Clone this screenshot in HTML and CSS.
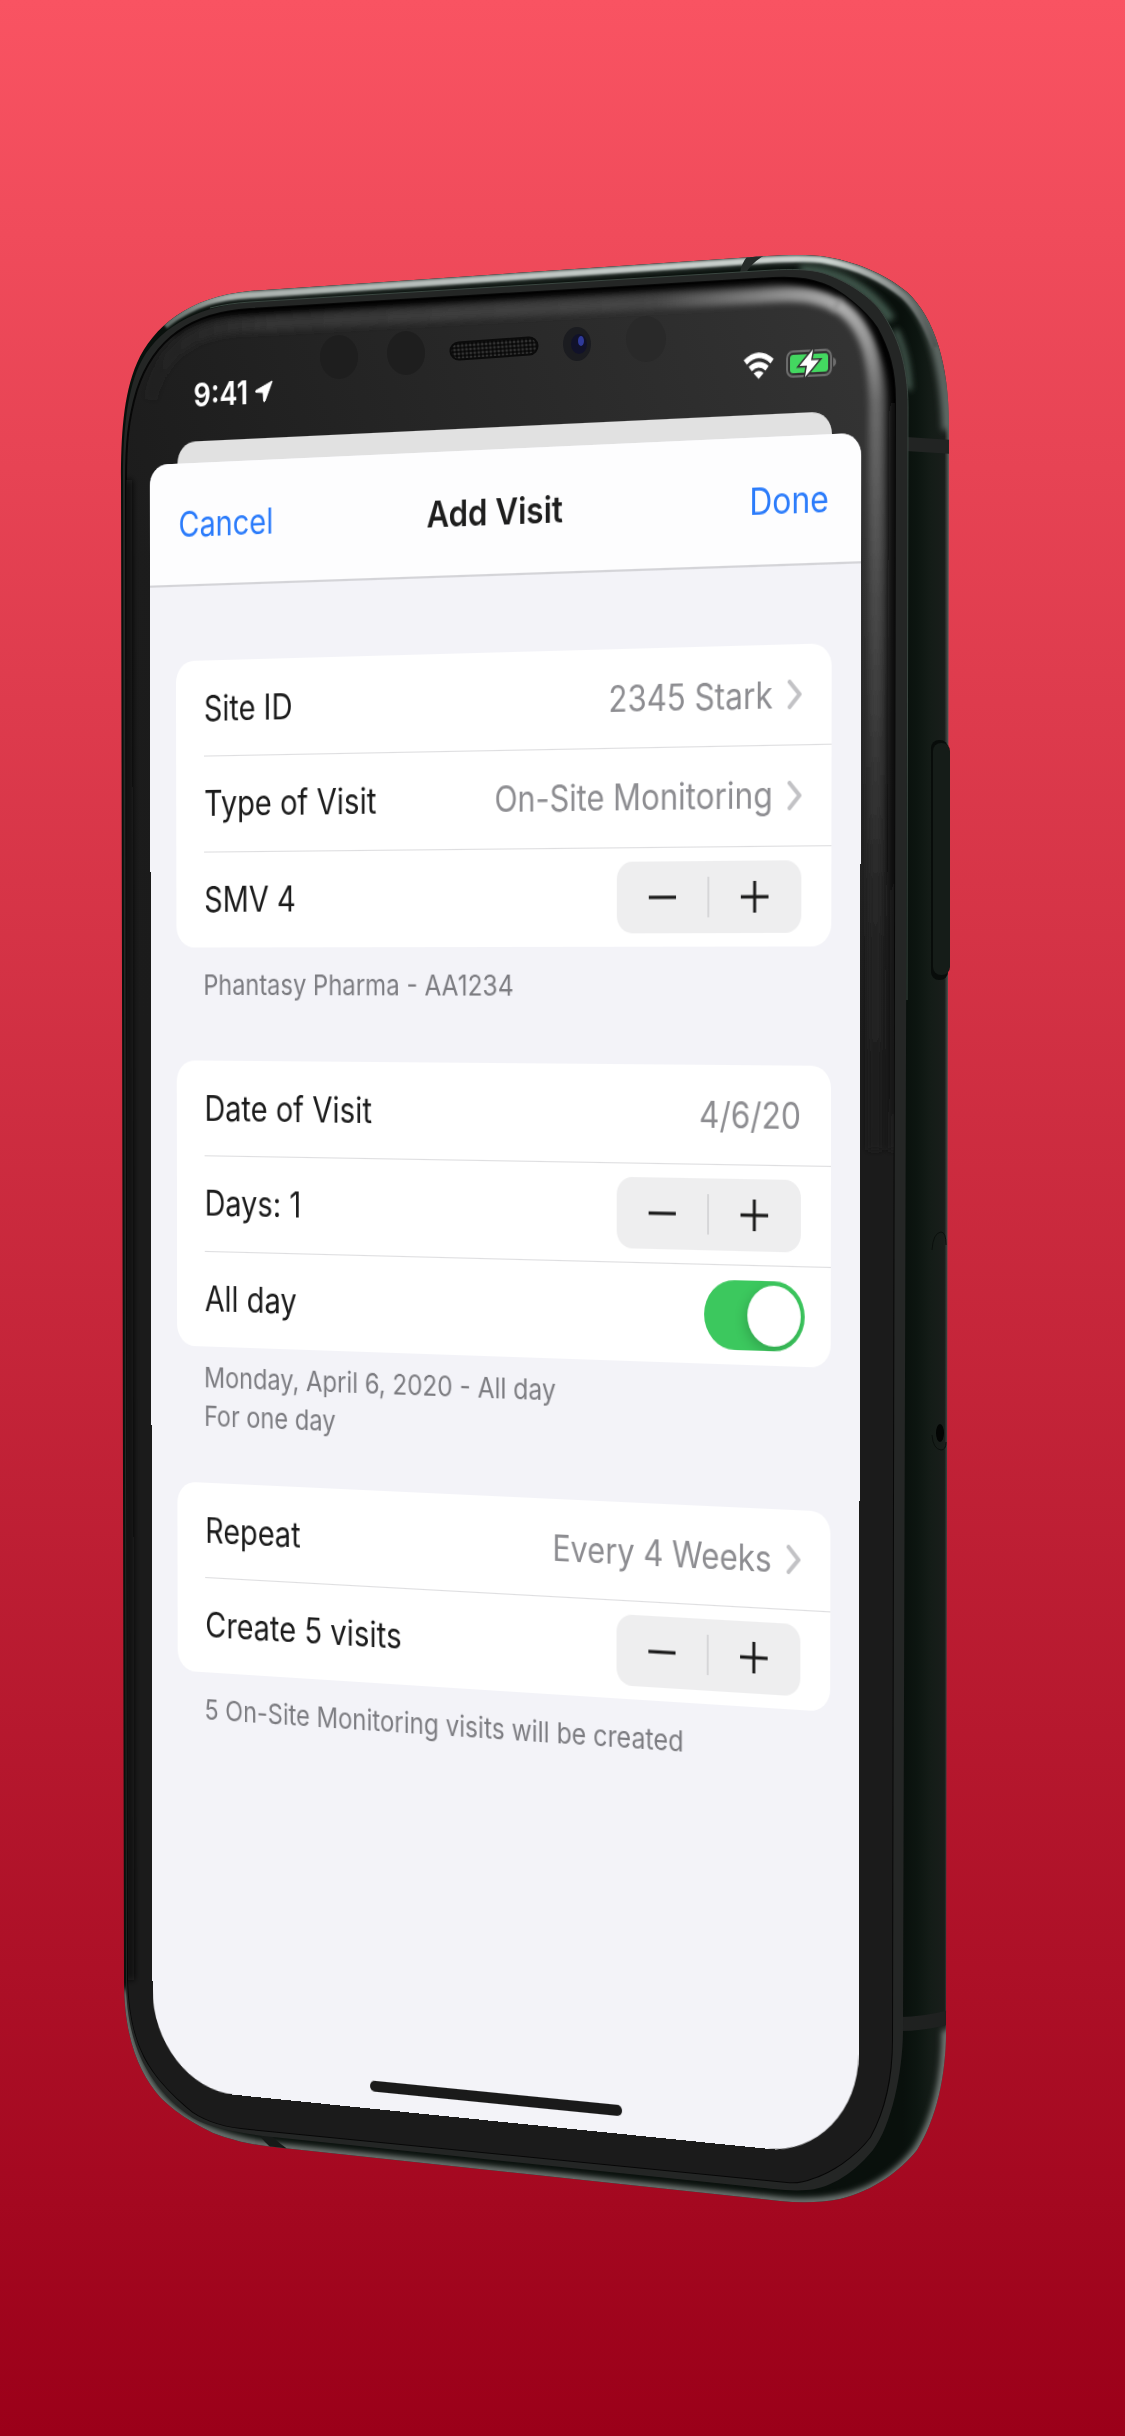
FILE: index.html
```html
<!DOCTYPE html>
<html lang="en">
<head>
<meta charset="utf-8">
<meta name="viewport" content="width=device-width, initial-scale=1">
<title>Add Visit</title>
<link rel="stylesheet" href="styles.css">
</head>
<body>
<main class="stage">
  <div class="device">
    <svg class="device-body" viewBox="112 232 901 1972" aria-hidden="true">
      <defs>
        <linearGradient id="side" gradientUnits="userSpaceOnUse" x1="903" y1="0" x2="949" y2="0">
          <stop offset="0" stop-color="#09100c"/>
          <stop offset=".3" stop-color="#0c1510"/>
          <stop offset=".6" stop-color="#141c17"/>
          <stop offset=".9" stop-color="#191e1b"/>
          <stop offset="1" stop-color="#5c5f5d"/>
        </linearGradient>
        <linearGradient id="topEdge" gradientUnits="userSpaceOnUse" x1="150" y1="0" x2="949" y2="0">
          <stop offset="0" stop-color="#4b5752"/>
          <stop offset=".1" stop-color="#a9b1ad"/>
          <stop offset=".5" stop-color="#c0c7c4"/>
          <stop offset=".85" stop-color="#cdd4d0"/>
          <stop offset=".93" stop-color="#8c9290"/>
          <stop offset="1" stop-color="#3a403d"/>
        </linearGradient>
        <linearGradient id="glass" gradientUnits="userSpaceOnUse" x1="130" y1="520" x2="900" y2="300">
          <stop offset="0" stop-color="#1c1c1c"/>
          <stop offset="1" stop-color="#353535"/>
        </linearGradient>
        <linearGradient id="glassFade" x1="0" y1="0" x2="0" y2="1">
          <stop offset=".12" stop-color="#1b1b1b" stop-opacity="0"/>
          <stop offset=".4" stop-color="#1b1b1b"/>
        </linearGradient>
        <linearGradient id="shineTop" gradientUnits="userSpaceOnUse" x1="130" y1="0" x2="830" y2="0">
          <stop offset="0" stop-color="#2a2a2a" stop-opacity="0"/>
          <stop offset=".2" stop-color="#343434"/>
          <stop offset=".75" stop-color="#464646"/>
          <stop offset="1" stop-color="#a8a8a8"/>
        </linearGradient>
        <linearGradient id="shineSide" gradientUnits="userSpaceOnUse" x1="0" y1="300" x2="0" y2="1150">
          <stop offset="0" stop-color="#b4b4b4"/>
          <stop offset=".12" stop-color="#6a6a6a"/>
          <stop offset=".35" stop-color="#4a4a4a"/>
          <stop offset=".7" stop-color="#262626"/>
          <stop offset="1" stop-color="#1b1b1b"/>
        </linearGradient>
        <linearGradient id="glassEdge" gradientUnits="userSpaceOnUse" x1="0" y1="300" x2="0" y2="1150">
          <stop offset="0" stop-color="#050505"/>
          <stop offset=".5" stop-color="#0c0c0c"/>
          <stop offset="1" stop-color="#1b1b1b"/>
        </linearGradient>
        <pattern id="mesh" width="4" height="4" patternUnits="userSpaceOnUse" patternTransform="rotate(-4)">
          <rect width="4" height="4" fill="#141414"/>
          <circle cx="1" cy="1" r="1" fill="#3c3c3c"/>
          <circle cx="3" cy="3" r="1" fill="#050505"/>
        </pattern>
        <filter id="soft" filterUnits="userSpaceOnUse" x="100" y="220" width="920" height="2000"><feGaussianBlur stdDeviation="3"/></filter>
        <filter id="fine" filterUnits="userSpaceOnUse" x="100" y="220" width="920" height="2000"><feGaussianBlur stdDeviation="1"/></filter>
        <path id="shell" d="M121 480C121 437 123 395 137 363C153 327 188 297 250 291L767 256C785 255 810 254 827 257C862 263 889 277 907 292C935 318 949 365 949 425L946 2030C946 2075 937 2118 917 2150C900 2171 875 2190 840 2199C820 2203 800 2203 780 2201L283 2148C255 2145 240 2143 213 2133C187 2120 173 2110 160 2097C140 2074 124 2040 124 1980Z"/>
        <path id="rim" d="M123 480C123 437 126 395 139 366C156 330 192 307 250 302L773 270C790 269 810 269 823 273C848 281 870 297 880 310C898 335 908 365 908 407L903 2030C903 2070 892 2125 873 2150C850 2178 825 2189 807 2190C795 2191 785 2190 773 2189L263 2136C240 2133 210 2128 193 2118C145 2085 126 2040 126 1980Z"/>
        <path id="face" d="M126 480C126 445 128 420 137 390C150 350 180 313 250 309L773 278C790 277 808 278 823 284C840 290 865 310 877 328C889 350 895 370 895 400L892 2040C892 2075 885 2110 870 2137C855 2157 830 2173 813 2178C803 2182 795 2183 787 2182L250 2129C225 2127 208 2122 193 2112C148 2075 130 2045 128 1980Z"/>
        <clipPath id="shellClip"><use href="#shell"/></clipPath>
        <clipPath id="faceClip"><use href="#face"/></clipPath>
      </defs>

      <use href="#shell" fill="url(#side)"/>
      <g clip-path="url(#shellClip)">
        <path d="M180 308C205 295 225 293 250 292L767 257C785 256 810 255 827 258C862 264 889 278 907 293C930 315 946 360 948 430" fill="none" stroke="#5d6863" stroke-width="12" filter="url(#soft)"/>
        <path d="M165 326C195 302 220 297 250 295L767 260C785 259 810 258 827 261C860 267 886 281 904 296C917 308 927 327 935 347" fill="none" stroke="url(#topEdge)" stroke-width="6" filter="url(#fine)"/>
        <path d="M800 270C845 270 875 296 891 320" fill="none" stroke="#41564b" stroke-width="10" filter="url(#soft)"/>
        <path d="M895 330C903 345 908 365 909 390" fill="none" stroke="#4a5f54" stroke-width="6" filter="url(#soft)"/>
        <path d="M124 1990C126 2040 140 2074 160 2097C180 2120 213 2140 283 2148L780 2201C850 2208 890 2185 917 2150C937 2118 946 2075 946 2030" fill="none" stroke="#868d8a" stroke-width="7" filter="url(#soft)"/>
        <path d="M743 273C746 265 755 257 767 250L758 250C749 257 744 266 743 273Z" fill="#262b29" stroke="#262b29" stroke-width="6"/>
        <path d="M264 2134C269 2140 275 2146 284 2152" fill="none" stroke="#161a18" stroke-width="9"/>
        <path d="M906 444L952 447" fill="none" stroke="#222423" stroke-width="14"/>
        <path d="M900 2024C920 2024 935 2021 950 2017" fill="none" stroke="#1f2120" stroke-width="14"/>
      </g>
      <rect x="931" y="740" width="17" height="240" rx="8" fill="#080c0a"/>
      <rect x="933" y="743" width="17" height="232" rx="8" fill="#151c18"/>
      <path d="M932 1250Q933 1233 941 1232Q946 1232 946 1245" fill="none" stroke="#0a0f0c"/>
      <path d="M932 1435Q933 1449 941 1450Q946 1450 946 1442" fill="none" stroke="#0a0f0c"/>
      <ellipse cx="940" cy="1433" rx="4" ry="9" fill="#030504"/>
      <use href="#rim" fill="#242625"/>
      <path d="M210 308C222 305 235 303 250 302L773 270C790 269 810 269 823 273C848 281 870 297 880 310C898 335 908 365 908 407L907 1000" fill="none" stroke="#3a4640" stroke-width="1"/>
      <use href="#face" fill="url(#glass)" stroke="#070707" stroke-width="2"/>
      <use href="#face" fill="url(#glassFade)"/>
      <g clip-path="url(#faceClip)">
        <path d="M170 330C190 314 215 309 250 308L773 277C840 275 895 330 895 400L894 1150" fill="none" stroke="url(#glassEdge)" stroke-width="13" filter="url(#soft)"/>
        <path d="M150 400C160 350 195 327 250 325L780 295C806 294 822 297 838 306" fill="none" stroke="url(#shineTop)" stroke-width="14" filter="url(#soft)"/>
        <path d="M836 304C866 322 876 355 876 410L875 1150" fill="none" stroke="url(#shineSide)" stroke-width="14" filter="url(#soft)"/>
        <path d="M128 480L130 1980" fill="none" stroke="#101010" stroke-width="8" filter="url(#soft)"/>
      </g>
      <g fill="#1e1e1e">
        <ellipse cx="339" cy="357" rx="19" ry="22"/>
        <ellipse cx="406" cy="353" rx="19" ry="22"/>
        <ellipse cx="646" cy="339" rx="20" ry="23" fill="#292929"/>
      </g>
      <path d="M459 351L529 346" stroke="#0b0b0b" stroke-width="19" stroke-linecap="round"/>
      <path d="M459 351L529 346" stroke="url(#mesh)" stroke-width="15" stroke-linecap="round"/>
      <ellipse cx="577" cy="344" rx="14" ry="17" fill="#1b1c20"/>
      <ellipse cx="579" cy="344" rx="8" ry="10" fill="#11122a"/>
      <ellipse cx="581" cy="341" rx="3" ry="5" fill="#2f3a9a"/>
    </svg>

    <div class="screen">
      <header class="status">
        <div class="status-time">
          <span>9:41</span>
          <svg width="20" height="20" viewBox="0 0 20 20" aria-label="Location in use"><path d="M19 1L1 9Q0 10 1 10.500L9 11L9.500 19Q10 20 11 19Z" fill="#fff" stroke="#fff" stroke-linejoin="round"/></svg>
        </div>
        <div class="status-icons">
          <svg width="31" height="24" viewBox="0 0 31 24" aria-label="Wi-Fi"><g fill="none" stroke="#fff" stroke-width="5"><path d="M2 8.500Q15.500-3 29 8.500"/><path d="M7 14.500Q15.500 7.500 24 14.500"/></g><path d="M15.500 23.500L10.500 18.500Q15.500 14.500 20.500 18.500Z" fill="#fff"/></svg>
          <svg width="50" height="24" viewBox="0 0 50 24" aria-label="Battery charging"><rect x="1" y="1" width="44" height="22" rx="6" fill="none" stroke="#6c6c6c" stroke-width="2"/><rect x="4" y="4" width="38" height="16" rx="3" fill="#43d860"/><path d="M47 8Q50 9 50 12T47 16Z" fill="#6c6c6c"/><path d="M27 0L13.500 14H21L19 24L33 9.500H25Z" fill="#fff" stroke="#333" stroke-width="3" paint-order="stroke"/></svg>
        </div>
      </header>
      <div class="back-sheet"></div>
      <section class="sheet">
        <nav class="nav">
          <button type="button" class="nav-btn">Cancel</button>
          <h1 class="nav-title">Add Visit</h1>
          <button type="button" class="nav-btn nav-btn-end">Done</button>
        </nav>
        <form class="form">
          <div class="card">
            <button type="button" class="row">
              <span class="label">Site ID</span><span class="value">2345 Stark</span>
              <svg class="chevron" width="14" height="26" viewBox="0 0 14 26" aria-hidden="true"><path d="M2 2L12 13L2 24"/></svg>
            </button>
            <button type="button" class="row">
              <span class="label">Type of Visit</span><span class="value">On-Site Monitoring</span>
              <svg class="chevron" width="14" height="26" viewBox="0 0 14 26" aria-hidden="true"><path d="M2 2L12 13L2 24"/></svg>
            </button>
            <div class="row">
              <span class="label">SMV 4</span>
              <div class="stepper">
                <button type="button" aria-label="Decrease SMV"><svg width="28" height="28" viewBox="0 0 28 28"><path d="M0 14H28"/></svg></button>
                <button type="button" aria-label="Increase SMV"><svg width="28" height="28" viewBox="0 0 28 28"><path d="M0 14H28M14 0V28"/></svg></button>
              </div>
            </div>
          </div>
          <p class="note">Phantasy Pharma - AA1234</p>

          <div class="card">
            <button type="button" class="row">
              <span class="label">Date of Visit</span><span class="value">4/6/20</span>
            </button>
            <div class="row">
              <span class="label">Days: 1</span>
              <div class="stepper">
                <button type="button" aria-label="Fewer days"><svg width="28" height="28" viewBox="0 0 28 28"><path d="M0 14H28"/></svg></button>
                <button type="button" aria-label="More days"><svg width="28" height="28" viewBox="0 0 28 28"><path d="M0 14H28M14 0V28"/></svg></button>
              </div>
            </div>
            <div class="row row-switch">
              <label class="label" for="all-day">All day</label>
              <input class="switch" type="checkbox" id="all-day" checked>
            </div>
          </div>
          <p class="note note-lines">Monday, April 6, 2020 - All day<br>For one day</p>

          <div class="card">
            <button type="button" class="row">
              <span class="label">Repeat</span><span class="value">Every 4 Weeks</span>
              <svg class="chevron" width="14" height="26" viewBox="0 0 14 26" aria-hidden="true"><path d="M2 2L12 13L2 24"/></svg>
            </button>
            <div class="row">
              <span class="label">Create 5 visits</span>
              <div class="stepper">
                <button type="button" aria-label="Fewer visits"><svg width="28" height="28" viewBox="0 0 28 28"><path d="M0 14H28"/></svg></button>
                <button type="button" aria-label="More visits"><svg width="28" height="28" viewBox="0 0 28 28"><path d="M0 14H28M14 0V28"/></svg></button>
              </div>
            </div>
          </div>
          <p class="note">5 On-Site Monitoring visits will be created</p>
        </form>
        <div class="home-bar"></div>
      </section>
    </div>
  </div>
</main>
</body>
</html>
```
FILE: styles.css
```css
* {
  box-sizing: border-box;
}

body {
  margin: 0;
  font-family: Inter, Roboto, "Liberation Sans", sans-serif;
  background: #9b0019;
}

.stage {
  min-height: 100vh;
  display: grid;
  place-content: center;
  overflow: hidden;
  background: linear-gradient(#f95362, #9b0019);
}

/* The device drawing and its screen share one grid cell. */
.device {
  display: grid;
  grid-template-columns: 901px;
  grid-template-rows: 1972px;
}

.device-body,
.screen {
  grid-area: 1 / 1;
}

.device-body {
  width: 100%;
  height: 100%;
}

/* Projects the flat 750 x 1624 interface onto the turned phone. */
.screen {
  width: 750px;
  height: 1624px;
  display: flex;
  flex-direction: column;
  border-radius: 0 0 92px 92px;
  overflow: hidden;
  transform-origin: 0 0;
  transform: matrix3d(
    0.8876597, -0.0591424, 0, -0.00008056,
    0.0021305, 1.0776824, 0, 0.0000050951,
    0, 0, 1, 0,
    37.5313, 117.60986, 0, 0.9988791
  );
}

button {
  margin: 0;
  padding: 0;
  border: 0;
  background: none;
  font: inherit;
  color: inherit;
  text-align: left;
}

.status {
  height: 87px;
  padding: 0 25px 0 49px;
  display: flex;
  align-items: center;
  justify-content: space-between;
  color: #fff;
}

.status-time {
  display: flex;
  align-items: center;
  gap: 8px;
  font-size: 30px;
  font-weight: 600;
}

.status-icons {
  display: flex;
  align-items: center;
  gap: 12px;
}

.back-sheet {
  height: 40px;
  margin: 0 29px -20px 31px;
  flex: none;
  border-radius: 20px 20px 0 0;
  background: #e1e1e1;
}

.sheet {
  flex: 1;
  display: flex;
  flex-direction: column;
  position: relative;
  border-radius: 20px 20px 0 0;
  overflow: hidden;
  background: #f3f3f8;
}

.nav {
  height: 114px;
  padding: 0 32px;
  display: grid;
  grid-template-columns: 1fr auto 1fr;
  align-items: center;
  border-bottom: 2px solid #d4d4d8;
  background: #fdfdfe;
  font-size: 32px;
}

.nav-btn {
  color: #2a7bfb;
}

.nav-btn-end {
  text-align: right;
}

.nav-title {
  margin: 0;
  font-size: 33px;
  font-weight: 600;
  color: #1d1d1d;
}

.form {
  flex: 1;
  padding: 69px 29px 0;
}

.card {
  border-radius: 20px;
  overflow: hidden;
  background: #fff;
}

.row {
  width: 100%;
  height: 88px;
  padding: 0 30px 0 31px;
  display: flex;
  align-items: center;
  font-size: 32px;
  color: #1b1b1b;
}

.row + .row {
  height: 89px;
  background: linear-gradient(#dedee0, #dedee0) 31px 0 / 100% 1px no-repeat;
}

.label {
  flex: 1;
}

.value {
  color: #8d8d91;
}

.chevron {
  margin-left: 15px;
  fill: none;
  stroke: #c2c2c5;
  stroke-width: 4;
  stroke-linecap: round;
  stroke-linejoin: round;
}

.stepper {
  width: 188px;
  height: 64px;
  display: grid;
  grid-template-columns: 1fr 1fr;
  border-radius: 16px;
  background: linear-gradient(#d6d6d8, #d6d6d8) center / 2px 36px no-repeat #eeeeef;
}

.stepper button {
  display: grid;
  place-items: center;
}

.stepper svg {
  fill: none;
  stroke: #1b1b1b;
  stroke-width: 3;
}

.row-switch {
  padding-right: 26px;
}

.switch {
  appearance: none;
  width: 102px;
  height: 62px;
  margin: 0;
  display: flex;
  justify-content: flex-end;
  padding: 4px;
  border-radius: 31px;
  overflow: hidden;
  background: #3cc85e;
}

.switch::before {
  content: "";
  width: 54px;
  height: 54px;
  border-radius: 50%;
  background: #fff;
  box-shadow: -2px 4px 12px rgba(0, 0, 0, .18);
}

.note {
  margin: 0;
  padding: 17px 30px 52px;
  font-size: 26px;
  line-height: 36px;
  color: #7c7c81;
}

.note-lines {
  padding: 11px 30px 44px;
}

.home-bar {
  width: 268px;
  height: 10px;
  margin: 0 auto 16px;
  border-radius: 5px;
  background: #1a1a1a;
}
```
